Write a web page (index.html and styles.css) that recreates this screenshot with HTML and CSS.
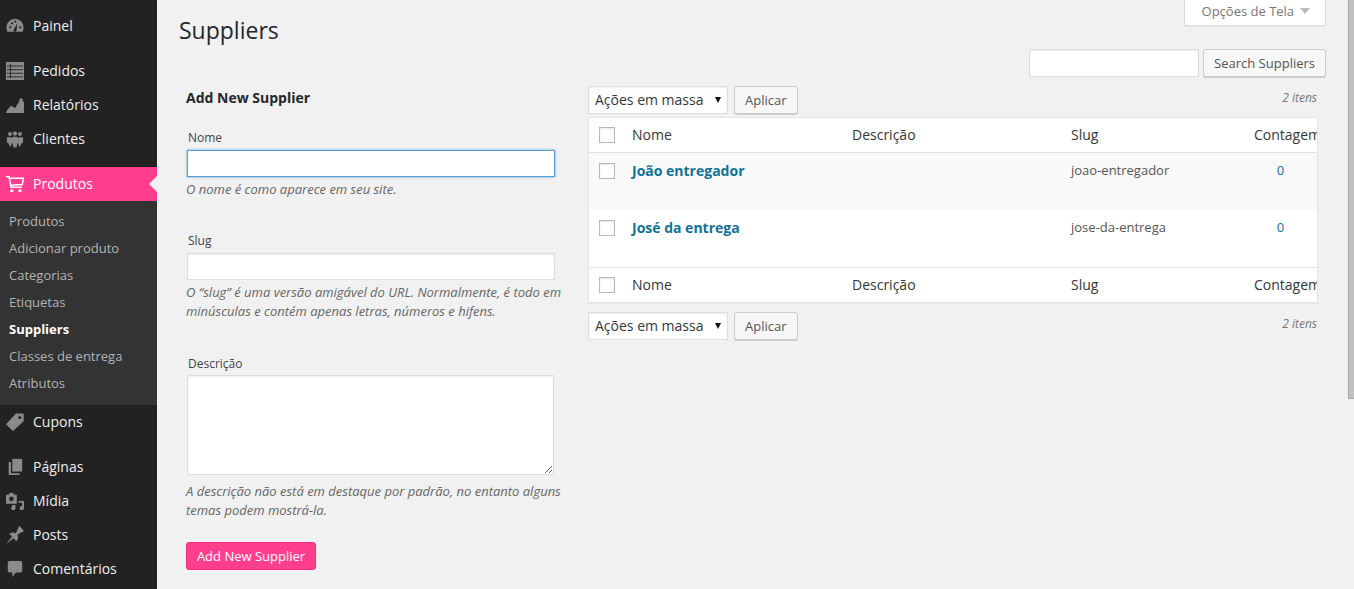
FILE: index.html
```html
<!DOCTYPE html>
<html lang="pt-BR">
<head>
  <meta charset="UTF-8">
  <title>Suppliers</title>
  <link rel="stylesheet" href="styles.css">
</head>
<body>

  <div class="sidebar">
    <a class="menu-item first"><svg class="ico" viewBox="0 0 20 20"><path fill-rule="evenodd" d="M10 2a9.500 9.500 0 0 0-9.500 9.500c0 1.800.4 3.500 1 5h17c.6-1.500 1-3.200 1-5A9.500 9.500 0 0 0 10 2zM3.500 11.500a1.200 1.200 0 1 1 2.400 0 1.200 1.200 0 0 1-2.400 0zM5.500 7a1.200 1.200 0 1 1 2.400 0 1.200 1.200 0 0 1-2.400 0zM9 5a1.200 1.200 0 1 1 2.400 0A1.200 1.200 0 0 1 9 5zm5.500 6.500a1.200 1.200 0 1 1 2.400 0 1.200 1.200 0 0 1-2.400 0zM8.500 15.500c-.5-.8-.2-1.700.5-2.200L12.500 7l-.7 7.500a1.900 1.900 0 0 1-3.300 1z"/></svg>Painel</a>

    <a class="menu-item sep"><svg class="ico" viewBox="0 0 20 20"><path d="M0 0h20v20H0z"/><path class="ico-line" d="M1 4.500h18M1 8.500h18M1 12.500h18M1 16.500h18M5 2v16"/></svg>Pedidos</a>
    <a class="menu-item"><svg class="ico" viewBox="0 0 20 20"><path d="M0 19l1-3 3.500-4a1.800 1.800 0 0 1 2.800-.2l2.700 1.700 5-8a2 2 0 1 1 3 .6L20 6v13z"/></svg>Relatórios</a>
    <a class="menu-item"><svg class="ico" viewBox="0 0 20 20"><circle cx="4.500" cy="4.500" r="2.200"/><circle cx="10" cy="4" r="2.400"/><circle cx="15.500" cy="4.500" r="2.200"/><path d="M1.500 8h4l1 1v6l-1 3H4l-1-3-2-1V9zM18.500 8h-4l-1 1v6l1 3H16l1-3 2-1V9zM7.500 7.500h5l1 1.500v5l-1 1.500-1 4h-3l-1-4-1-1.500V9z"/></svg>Clientes</a>

    <a class="menu-item sep current"><svg class="ico" viewBox="0 0 20 20"><path fill="none" stroke="currentColor" stroke-width="1.700" d="M0 2h3.500l2 11.500h12M4 3.500h15.500l-1.500 7-13 1"/><circle cx="6.500" cy="17.500" r="1.800"/><circle cx="15.500" cy="17.500" r="1.800"/></svg>Produtos</a>
    <div class="submenu">
      <a>Produtos</a>
      <a>Adicionar produto</a>
      <a>Categorias</a>
      <a>Etiquetas</a>
      <a class="on">Suppliers</a>
      <a>Classes de entrega</a>
      <a>Atributos</a>
    </div>
    <a class="menu-item"><svg class="ico" viewBox="0 0 20 20"><path fill-rule="evenodd" d="M11 .5h7.500a1.200 1.200 0 0 1 1.200 1.200V9L8.500 19.500a1 1 0 0 1-1.500 0L0 12.500zM15.300 3.200a1.700 1.700 0 1 0 0 3.400 1.700 1.700 0 0 0 0-3.400z"/></svg>Cupons</a>

    <a class="menu-item sep"><svg class="ico" viewBox="0 0 20 20"><path d="M7 1h11v14H7z"/><path d="M3 4.500h2.500V17H15v2H3z"/></svg>Páginas</a>
    <a class="menu-item"><svg class="ico" viewBox="0 0 20 20"><path fill-rule="evenodd" d="M0 3h3l1-2h4l1 2h3v10H0zm6 2a2.600 2.600 0 1 0 0 5.200A2.600 2.600 0 0 0 6 5z"/><path d="M14 10h6v8a2.400 2.400 0 1 1-2.200-2.400V12H14zM7 14.500h3.500V18a2.400 2.400 0 1 1-3.500-2.100z"/></svg>Mídia</a>
    <a class="menu-item"><svg class="ico" viewBox="0 0 20 20"><path d="M0 20l7-8.500L3.500 9 7 7l4 1 3-7 1-1 5 5.500-1 .7-6 3.300.5 4-2 3.500-3-3.500z"/></svg>Posts</a>
    <a class="menu-item"><svg class="ico" viewBox="0 0 20 20"><path d="M4 1h12a2 2 0 0 1 2 2v9a2 2 0 0 1-2 2h-5l-4 5v-5H4a2 2 0 0 1-2-2V3a2 2 0 0 1 2-2z"/></svg>Comentários</a>
  </div>

  <div class="content">
    <div class="top-row">
      <h1>Suppliers</h1>
      <div class="screen-tab">Opções de Tela <span class="tab-arrow"></span></div>
    </div>

    <div class="search-row">
      <input class="search-input" type="text">
      <button class="btn">Search Suppliers</button>
    </div>

    <div class="columns">
      <div class="col-left">
        <h3>Add New Supplier</h3>

        <div class="field">
          <label>Nome</label>
          <input class="focused" type="text">
          <p>O nome é como aparece em seu site.</p>
        </div>

        <div class="field">
          <label>Slug</label>
          <input type="text">
          <p>O “slug” é uma versão amigável do URL. Normalmente, é todo em minúsculas e contém apenas letras, números e hifens.</p>
        </div>

        <div class="field last">
          <label>Descrição</label>
          <textarea></textarea>
          <p>A descrição não está em destaque por padrão, no entanto alguns temas podem mostrá-la.</p>
        </div>

        <button class="btn-primary">Add New Supplier</button>
      </div>

      <div class="col-right">
        <div class="tablenav">
          <div class="fake-select">Ações em massa<span class="sel-arrow"></span></div>
          <button class="btn">Aplicar</button>
          <span class="count">2 itens</span>
        </div>

        <div class="table">
          <div class="tr head">
            <div class="c-check"><span class="check"></span></div>
            <div class="c-name">Nome</div>
            <div class="c-desc">Descrição</div>
            <div class="c-slug">Slug</div>
            <div class="c-count">Contagem</div>
          </div>
          <div class="tr row alt">
            <div class="c-check"><span class="check"></span></div>
            <div class="c-name"><a>João entregador</a></div>
            <div class="c-desc"></div>
            <div class="c-slug">joao-entregador</div>
            <div class="c-count num">0</div>
          </div>
          <div class="tr row">
            <div class="c-check"><span class="check"></span></div>
            <div class="c-name"><a>José da entrega</a></div>
            <div class="c-desc"></div>
            <div class="c-slug">jose-da-entrega</div>
            <div class="c-count num">0</div>
          </div>
          <div class="tr head foot">
            <div class="c-check"><span class="check"></span></div>
            <div class="c-name">Nome</div>
            <div class="c-desc">Descrição</div>
            <div class="c-slug">Slug</div>
            <div class="c-count">Contagem</div>
          </div>
        </div>

        <div class="tablenav bottom">
          <div class="fake-select">Ações em massa<span class="sel-arrow"></span></div>
          <button class="btn">Aplicar</button>
          <span class="count">2 itens</span>
        </div>
      </div>
    </div>
  </div>

  <div class="scrollbar"><div class="thumb"></div></div>

</body>
</html>
```

FILE: styles.css
```css
html, body { margin: 0; height: 589px; overflow: hidden; }
body { display: flex; background: #f1f1f1; color: #444; font-family: "Open Sans", sans-serif; font-size: 13px; }
* { box-sizing: border-box; }

/* sidebar */
.sidebar { width: 157px; height: 589px; flex: none; background: #222; overflow: hidden; padding-top: 9px; }
.menu-item { display: flex; align-items: center; position: relative; height: 34px; padding: 0 0 2px 33px; color: #eee; font-size: 14px; }
.menu-item.sep { margin-top: 11px; }
.menu-item.current { background: #ff3f8e; color: #fff; }
.menu-item.current::after { content: ""; position: absolute; right: 0; top: 9px; border: 8px solid transparent; border-right-color: #f1f1f1; border-left-width: 0; }
.ico { position: absolute; left: 6px; top: 8px; width: 18px; height: 18px; fill: #8a8a8a; color: #8a8a8a; }
.ico-line { fill: none; stroke: #222; stroke-width: 1; }
.current .ico { fill: #fff; color: #fff; }
.submenu { height: 204px; padding: 7px 0 8px; background: #333; }
.submenu a { display: block; height: 27px; line-height: 27px; padding-left: 9px; color: #b4b4b4; font-size: 13px; }
.submenu a.on { color: #fff; font-weight: 700; }

/* content */
.content { flex: 1; padding-left: 22px; padding-right: 28px; min-width: 0; }
.top-row { display: flex; justify-content: space-between; align-items: flex-start; height: 49px; }
h1 { margin: 14px 0 0; font-size: 23px; font-weight: 400; line-height: 33px; color: #23282d; }
.screen-tab { width: 142px; height: 27px; margin-top: -1px; padding-left: 2px; background: #fff; border: 1px solid #ddd; border-top: none; box-shadow: 0 1px 1px rgba(0,0,0,.04); color: #777; text-align: center; line-height: 25px; }
.tab-arrow { display: inline-block; margin-left: 3px; border: 5px solid transparent; border-top: 6px solid #bbb; border-bottom: 0; vertical-align: 2px; }

.search-row { display: flex; justify-content: flex-end; gap: 4px; height: 28px; }
.search-input { width: 170px; height: 28px; background: #fff; border: 1px solid #ddd; box-shadow: inset 0 1px 2px rgba(0,0,0,.07); }
.btn { height: 28px; padding: 0 10px 1px; background: #f7f7f7; border: 1px solid #ccc; border-radius: 3px; box-shadow: 0 1px 0 #ccc; color: #555; font: 13px "Open Sans", sans-serif; }

.columns { display: flex; }
.col-left { width: 409px; flex: none; padding: 10px 28px 0 7px; }
.col-left h3 { margin: 0; font-size: 14px; font-weight: 700; line-height: 22px; color: #23282d; }
.field { margin-bottom: 33px; }
.field:first-of-type { margin-top: 20px; }
.field.last { margin-top: 34px; margin-bottom: 31px; }
.field label { display: block; padding-left: 2px; font-size: 12px; line-height: 17px; margin-bottom: 4px; color: #444; }
.field.last label { margin-bottom: 3px; }
.field input, .field textarea { display: block; width: 368px; margin-left: 1px; background: #fff; border: 1px solid #ddd; box-shadow: inset 0 1px 2px rgba(0,0,0,.07); }
.field input { height: 27px; }
.field textarea { height: 100px; width: 367px; }
.field input.focused { border-color: #5b9dd9; box-shadow: 0 0 2px rgba(30,140,190,.8); }
.field p { margin: 3px 0 0; font-size: 13px; font-style: italic; line-height: 19px; color: #666; width: 376px; }
.field.last p { margin-top: 7px; }
.btn-primary { width: 130px; height: 28px; margin-top: -9px; display: block; background: #ff3f8e; border: 1px solid #f0317f; border-radius: 3px; color: #fff; font: 13px "Open Sans", sans-serif; }

.col-right { flex: 1; width: 729px; margin-top: 9px; margin-right: 9px; min-width: 0; }
.tablenav { display: flex; align-items: center; gap: 6px; height: 28px; }
.tablenav.bottom { margin-top: 9px; }
.fake-select { position: relative; width: 140px; height: 28px; padding-left: 6px; background: #fff; border: 1px solid #ddd; box-shadow: inset 0 1px 2px rgba(0,0,0,.07); color: #32373c; font-size: 14px; line-height: 25px; }
.sel-arrow { position: absolute; right: 6px; top: 10px; border: 3.500px solid transparent; border-top: 6px solid #111; border-bottom: 0; }
.count { margin-left: auto; font-size: 12px; font-style: italic; color: #777; margin-top: -5px; }

.table { margin-top: 3px; width: 730px; overflow: hidden; background: #fff; border: 1px solid #e5e5e5; box-shadow: 0 1px 1px rgba(0,0,0,.04); }
.tr { display: flex; }
.tr.head { height: 35px; align-items: center; padding-bottom: 2px; font-size: 14px; color: #32373c; border-bottom: 1px solid #e1e1e1; }
.tr.foot { border-bottom: 0; border-top: 1px solid #e1e1e1; height: 35px; }
.tr.row { height: 57px; padding-top: 10px; color: #555; }
.tr.row.alt { background: #f9f9f9; }
.tr.head .check { margin-top: 2px; }
.tr.row .c-name { margin-top: -2px; }
.tr.row .c-slug, .tr.row .c-count { margin-top: -1px; }
.c-check { width: 43px; flex: none; padding-left: 10px; display: flex; }
.check { width: 16px; height: 16px; background: #fff; border: 1px solid #b4b9be; box-shadow: inset 0 1px 2px rgba(0,0,0,.1); }
.c-name { width: 220px; flex: none; }
.c-name a { color: #0f7298; font-size: 14px; font-weight: 700; }
.c-desc { width: 219px; flex: none; }
.c-slug { width: 183px; flex: none; }
.c-count { flex: none; white-space: nowrap; }
.row .c-slug { font-size: 13px; line-height: 17px; }
.num { width: 53px; text-align: center; color: #0f7298; line-height: 17px; }

/* scrollbar on the right edge */
.scrollbar { position: absolute; right: 0; top: 0; width: 6px; height: 589px; background: #f1f1f1; }
.thumb { height: 399px; background: #c1c1c1; border-bottom: 1px solid #a8a8a8; border-left: 1px solid #a8a8a8; }
```
